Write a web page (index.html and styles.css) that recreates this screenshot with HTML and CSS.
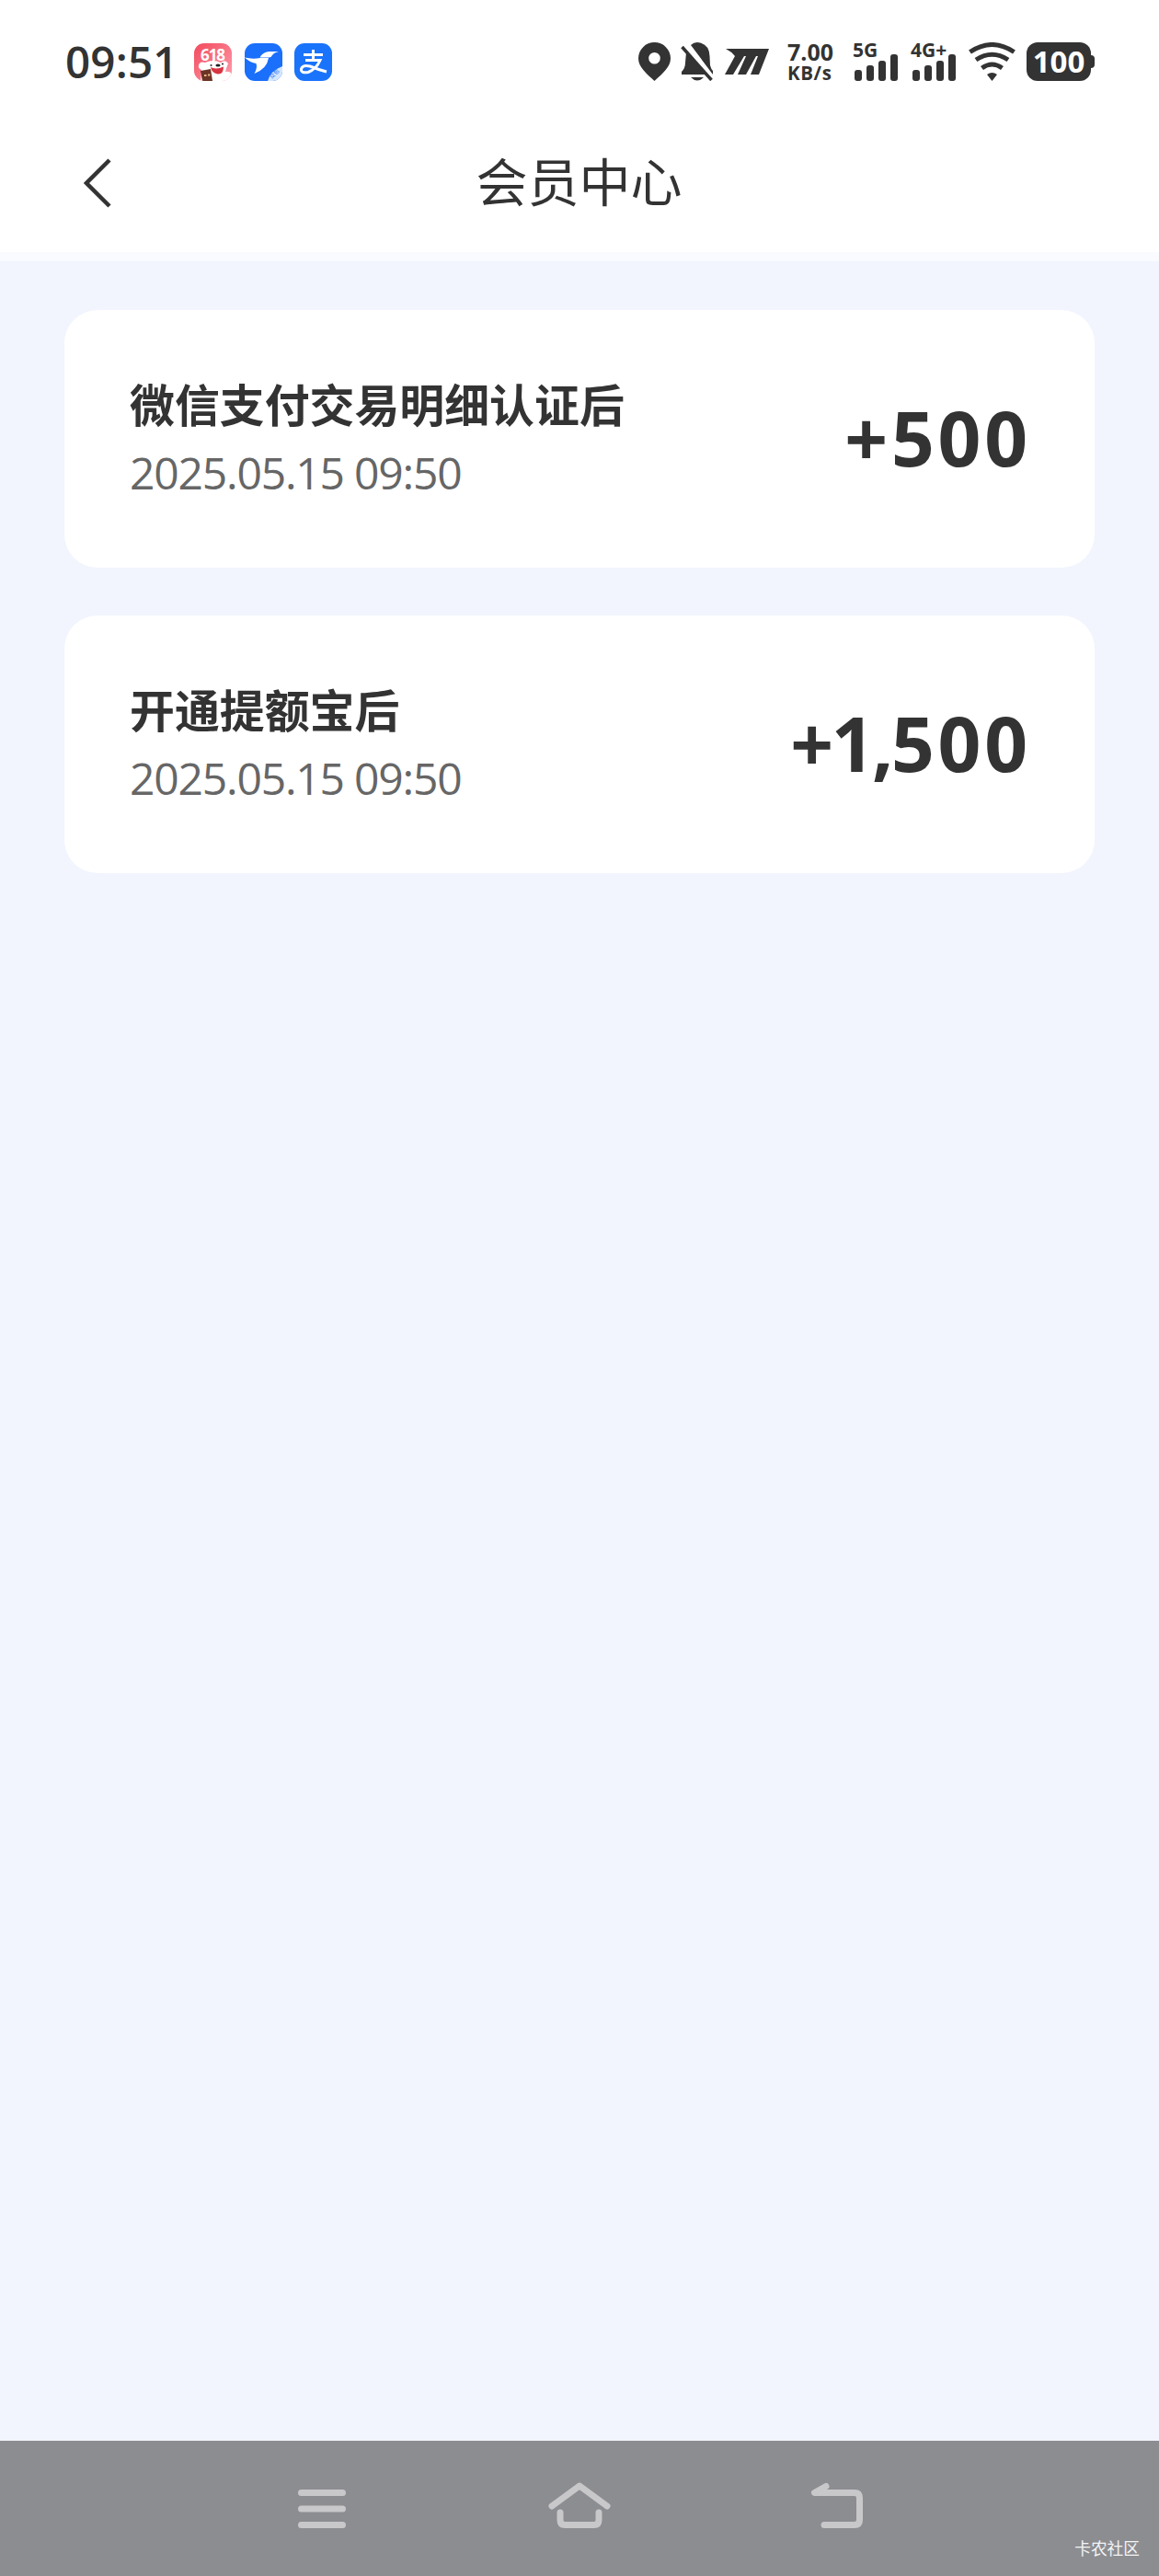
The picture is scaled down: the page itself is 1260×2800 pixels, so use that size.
FILE: index.html
```html
<!DOCTYPE html>
<html lang="zh-CN">
<head>
	<meta charset="UTF-8">
	<title>会员中心</title>
	<meta name="viewport" content="width=device-width, initial-scale=1.0">
	<link rel="stylesheet" href="styles.css">
</head>
<body>
	<div class="status">
		<span class="clock">09:51</span>
		<div class="apps">
			<svg width="41" height="41" viewBox="0 0 41 41">
				<defs>
					<clipPath id="round"><rect width="41" height="41" rx="11"/></clipPath>
					<linearGradient id="pink" x1="0" y1="0" x2="1" y2="1">
						<stop offset="0" stop-color="#f2495c"/>
						<stop offset="1" stop-color="#ff9fae"/>
					</linearGradient>
				</defs>
				<g clip-path="url(#round)">
					<rect width="41" height="41" fill="url(#pink)"/>
					<text class="promo" x="20.5" y="18.500" text-anchor="middle" textLength="27">618</text>
					<path d="M5 24Q6 19 12 21Q21 17 29 21Q34 17 37 22Q35 27 34 31Q40 30 41 35V41H7Q8 33 8 29Q4 27 5 24Z" fill="#fff"/>
					<path d="M18 26Q24 29 32 25.500Q32 34 25.500 33.500Q19 32 18 26Z" fill="#d93442"/>
					<ellipse cx="26" cy="24" rx="2.6" ry="1.600" fill="#222"/>
					<circle cx="18.500" cy="24" r="1" fill="#222"/>
					<circle cx="31" cy="22.500" r="1" fill="#222"/>
					<path d="M7 30L18 28L20 41H9Z" fill="#6b3425"/>
					<path d="M11 35h2.500M15 34.500h2.500" stroke="#e8b48a" stroke-width="2"/>
				</g>
			</svg>
			<svg width="41" height="41" viewBox="0 0 41 41">
				<g clip-path="url(#round)">
					<rect width="41" height="41" fill="#1a6ffb"/>
					<path d="M0 15.500Q8 17.500 17 16H26Q24 28 10.500 33Q14 27 12.500 22Q6 21 0 15.500Z" fill="#fff"/>
					<path d="M16.500 15.500Q20 9 27 9H37Q32 10 30 13Q29 15.500 26 15.500Z" fill="#fff"/>
					<path d="M41 25V41H25Q28 30 41 25Z" fill="#d6e6ff"/>
					<text class="tiny" x="27" y="35" transform="rotate(-45 33 34)">众包</text>
				</g>
			</svg>
			<svg width="41" height="41" viewBox="0 0 41 41">
				<rect width="41" height="41" rx="11" fill="#1a73fb"/>
				<path d="M10 12.500H31M20.500 7V19M12 18.500H28Q24 28 15 31.500Q7 33 7.500 28Q9 23 17 25Q27 29 35 31" fill="none" stroke="#fff" stroke-width="3"/>
			</svg>
		</div>
		<div class="signals">
			<svg class="pin" width="35" height="42" viewBox="0 0 35 42">
				<path fill-rule="evenodd" d="M17.500 0A17.500 17.500 0 0 1 35 17.500C35 27 26 34 17.500 42C9 34 0 27 0 17.500A17.500 17.500 0 0 1 17.500 0ZM17.500 11a6.300 6.300 0 1 0 0 12.600a6.300 6.300 0 1 0 0-12.600Z"/>
			</svg>
			<svg class="bell" width="36" height="42" viewBox="0 0 36 42">
				<path d="M11 3Q14 0 18 0Q31 1 31.500 15L32 25Q33 29 35 31V35ZM6 11L29 35H1V32Q5 28 5 22ZM11 38H25Q18 45 11 38Z"/>
				<path d="M3.500 3L35.500 39" stroke="#fff" stroke-width="3"/>
				<path d="M1.500 5L33.500 41" stroke="#333" stroke-width="3.500"/>
			</svg>
			<svg class="em" width="48" height="28" viewBox="0 0 48 28">
				<path d="M1 0H48L37 28H28L36 8H34L23 28H14L23 8H21L9 28H0L11 8Q7 3 1 0Z"/>
			</svg>
			<div class="speed"><span>7.00</span><span class="unit">KB/s</span></div>
			<div class="cell">
				<span>5G</span>
				<svg width="47" height="29" viewBox="0 0 47 29">
					<rect x="0" y="17" width="8" height="12" rx="3"/>
					<rect x="13" y="12" width="8" height="17" rx="3"/>
					<rect x="26" y="7" width="8" height="22" rx="3"/>
					<rect x="39" y="0" width="8" height="29" rx="3"/>
				</svg>
			</div>
			<div class="cell">
				<span>4G+</span>
				<svg width="47" height="29" viewBox="0 0 47 29">
					<rect x="0" y="17" width="8" height="12" rx="3"/>
					<rect x="13" y="12" width="8" height="17" rx="3"/>
					<rect x="26" y="7" width="8" height="22" rx="3"/>
					<rect x="39" y="0" width="8" height="29" rx="3"/>
				</svg>
			</div>
			<svg class="wifi" width="51" height="42" viewBox="0 0 51 42">
				<g fill="none" stroke="#333" stroke-width="5">
					<path d="M1.500 10.500Q25.500 -5.500 49.500 10.500"/>
					<path d="M8 19Q25.500 7.500 43 19"/>
					<path d="M14.500 28Q25.500 20 36.500 28"/>
				</g>
				<path d="M20 35Q25.500 31 31 35L25.500 42Z"/>
			</svg>
			<div class="battery">100</div>
		</div>
	</div>

	<div class="header">
		<svg class="back" width="30" height="54" viewBox="0 0 30 54">
			<path d="M28 2L3 27L28 52" fill="none" stroke="#333" stroke-width="4.500"/>
		</svg>
		<h1>会员中心</h1>
	</div>

	<div class="list">
		<div class="card">
			<div class="info">
				<div class="name">微信支付交易明细认证后</div>
				<div class="date">2025.05.15 09:50</div>
			</div>
			<div class="amount">+500</div>
		</div>
		<div class="card">
			<div class="info">
				<div class="name">开通提额宝后</div>
				<div class="date">2025.05.15 09:50</div>
			</div>
			<div class="amount"><span class="thousand">+1,</span>500</div>
		</div>
	</div>

	<div class="nav">
		<svg width="70" height="54" viewBox="0 0 70 54">
			<path d="M12.500 13.500H57.500M12.500 31H57.500M12.500 48.500H57.500"/>
		</svg>
		<svg width="70" height="54" viewBox="0 0 70 54">
			<path d="M5 28L35 6L65 28M14 35V43Q14 48.500 19 48.500H51Q56 48.500 56 43V35"/>
		</svg>
		<svg width="70" height="54" viewBox="0 0 70 54">
			<path d="M23 6.500L10.500 13.500H54Q59.500 13.500 59.500 19V43Q59.500 48.500 54 48.500H21"/>
		</svg>
		<span class="mark">卡农社区</span>
	</div>
</body>
</html>
```
FILE: styles.css
```css
* {
	box-sizing: border-box;
}

body {
	margin: 0;
	height: 2800px;
	display: flex;
	flex-direction: column;
	background: #f2f5fe;
	color: #333;
	font-family: "Open Sans", "Noto Sans CJK SC", sans-serif;
}

svg {
	display: block;
	flex: none;
	fill: #333;
}

/* status bar */
.status {
	height: 134px;
	padding: 0 70px 0 71px;
	background: #fff;
	display: flex;
	align-items: center;
}

.clock {
	width: 140px;
	font-size: 47.5px;
	font-weight: 600;
	letter-spacing: 0.2px;
	line-height: 60px;
	white-space: nowrap;
}

.apps {
	display: flex;
	gap: 13.5px;
}

.promo {
	font-size: 17px;
	font-weight: 700;
	fill: #fff;
}

.tiny {
	font-size: 6px;
	fill: #1a6ffb;
}

.signals {
	display: flex;
	height: 42px;
	margin-left: auto;
}

.bell {
	margin-left: 11px;
}

.em {
	margin: 7px 0 0 12px;
}

.speed {
	width: 52px;
	margin: -2px 0 0 20px;
	font-size: 25px;
	font-weight: 700;
	line-height: 24px;
	white-space: nowrap;
}

.speed span {
	display: block;
}

.speed .unit {
	font-size: 20.5px;
	line-height: 22px;
	letter-spacing: 0.6px;
}

.cell {
	width: 49px;
	margin-left: 19px;
	font-size: 21px;
	font-weight: 700;
	line-height: 17px;
	white-space: nowrap;
}

.cell + .cell {
	margin-left: 14px;
}

.cell span {
	display: block;
	height: 13px;
}

.cell svg {
	margin-left: 2px;
}

.wifi {
	margin-left: 14px;
}

.battery {
	position: relative;
	width: 70px;
	height: 42px;
	margin: 0 4px 0 12px;
	border-radius: 12px;
	background: #333;
	color: #fff;
	font-size: 33px;
	font-weight: 700;
	line-height: 42px;
	text-align: center;
}

.battery::after {
	content: "";
	position: absolute;
	right: -4px;
	top: 14px;
	width: 5px;
	height: 14px;
	border-radius: 0 4px 4px 0;
	background: #333;
}

/* title bar */
.header {
	height: 150px;
	padding: 38px 91px 0;
	display: flex;
	background: #fff;
	border-bottom: 10px solid #f9fbfe;
}

.header h1 {
	flex: 1;
	margin: -2px 31px 0 0;
	font-size: 56px;
	font-weight: 400;
	line-height: 54px;
	text-align: center;
}

/* records */
.list {
	flex: 1;
	padding: 53px 70px;
}

.card {
	height: 280px;
	margin-bottom: 52px;
	padding: 0 71px;
	display: flex;
	justify-content: space-between;
	border-radius: 36px;
	background: #fff;
}

.info {
	padding-top: 70px;
}

.name {
	font-size: 48.9px;
	font-weight: 700;
	line-height: 66px;
}

.date {
	margin-top: 8px;
	color: #666;
	font-size: 48px;
	line-height: 66px;
	letter-spacing: -1.2px;
}

.amount {
	padding-top: 88px;
	font-size: 82px;
	font-weight: 700;
	line-height: 100px;
	letter-spacing: 3.8px;
	margin-right: -2px;
}

.thousand {
	letter-spacing: -2.5px;
}

/* system keys */
.nav {
	position: relative;
	height: 147px;
	padding-top: 43px;
	display: flex;
	justify-content: center;
	gap: 210px;
	background: #8c8d91;
}

.nav svg {
	fill: none;
	stroke: #c8c8ca;
	stroke-width: 7;
	stroke-linecap: round;
	stroke-linejoin: round;
}

.mark {
	position: absolute;
	right: 21px;
	bottom: 18px;
	color: #f4f4f4;
	font-size: 17.7px;
	line-height: 24px;
}
```
